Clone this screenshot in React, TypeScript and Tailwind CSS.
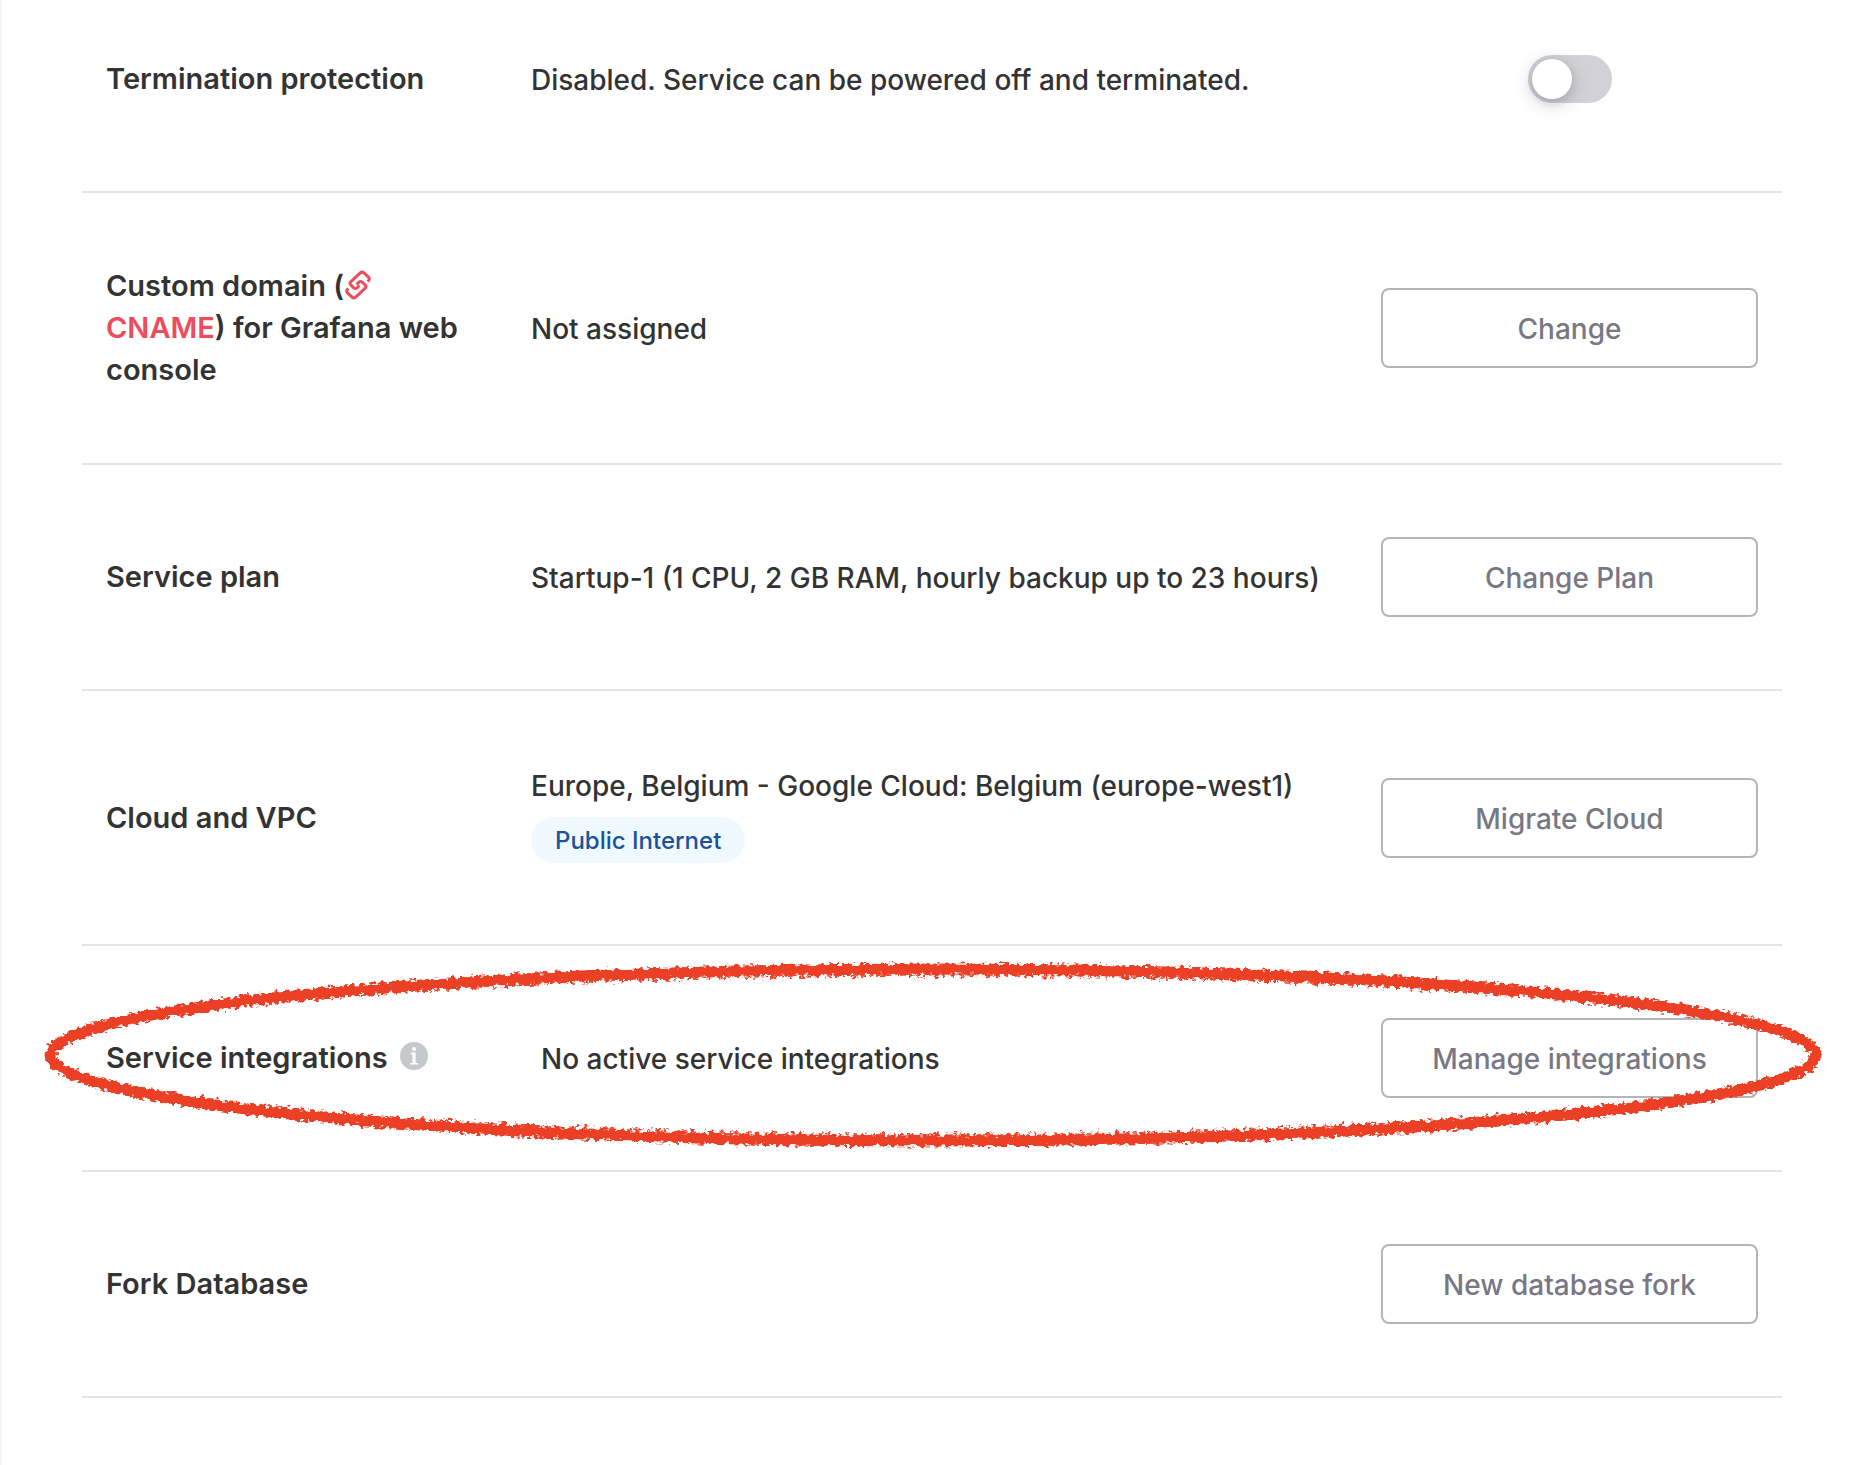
import type { ReactNode } from "react";

function Row({ label, children, action, first }: { label: ReactNode; children?: ReactNode; action: ReactNode; first?: boolean }) {
  return (
    <section
      className={
        "relative grid grid-cols-[1fr_2fr_1fr] items-center border-b-2 border-[#e4e4e5] pb-[72px] " +
        (first ? "pt-[39px]" : "pt-[72px]")
      }
    >
      <h2 className="px-6 text-[29px] leading-[42px] font-semibold">{label}</h2>
      <div className="px-6 pt-0.5 font-[450]">{children}</div>
      <div className="flex min-h-20 items-center justify-center px-6">{action}</div>
    </section>
  );
}

function ActionButton({ children }: { children: ReactNode }) {
  return (
    <button
      type="button"
      className="h-20 w-full rounded-lg border-2 border-[#b4b4bb] bg-white pt-0.5 font-medium text-[#787885]"
    >
      {children}
    </button>
  );
}

function LinkIcon() {
  return (
    <svg
      viewBox="-14 -15 28 30"
      className="inline-block h-[30px] w-[28px] align-[-4px]"
      fill="none"
      stroke="currentColor"
      strokeWidth="3"
      strokeLinejoin="round"
      aria-hidden="true"
    >
      <path d="M9.6 -3.4 L10.6 -4.5 Q12 -6.2 10.5 -7.8 L6 -12.1 Q4.1 -13.7 2.3 -12.1 L-7.3 -3.2 Q-8.6 -1.7 -7.3 -.2 L-4.2 2.8 Q-2.6 4.2 -1 2.8 L1.4 .5" />
      <path d="M-9.6 3.4 L-10.6 4.5 Q-12 6.2 -10.5 7.8 L-6 12.1 Q-4.1 13.7 -2.3 12.1 L7.3 3.2 Q8.6 1.7 7.3 .2 L4.2 -2.8 Q2.6 -4.2 1 -2.8 L-1.4 -.5" />
    </svg>
  );
}

function InfoIcon() {
  return (
    <svg viewBox="0 0 28 28" className="ml-3 inline-block size-7 align-[-2px]" role="img" aria-label="Information">
      <circle cx="14" cy="14" r="14" fill="#c5c8cc" />
      <circle cx="14" cy="7" r="2" fill="#fff" />
      <path d="M10.5 10.6H15.6V21H18v1.6H10V21h2.5V12.2h-2z" fill="#fff" />
    </svg>
  );
}

function HandDrawnEllipse() {
  return (
    <svg
      viewBox="0 0 1784 200"
      preserveAspectRatio="none"
      className="pointer-events-none absolute -right-[42px] -left-[42px] top-2 h-[200px] w-[calc(100%+84px)]"
      aria-hidden="true"
    >
      <defs>
        <filter id="crayon" x="-2%" y="-10%" width="104%" height="120%" colorInterpolationFilters="sRGB">
          <feTurbulence type="fractalNoise" baseFrequency="0.2 0.3" numOctaves="2" seed="7" result="noise" />
          <feDisplacementMap in="SourceGraphic" in2="noise" scale="9" xChannelSelector="R" yChannelSelector="G" />
        </filter>
      </defs>
      <g filter="url(#crayon)" fill="none" stroke="#eb4025">
        <ellipse cx="893" cy="101" rx="883" ry="86" strokeWidth="11" />
        <ellipse cx="893" cy="101" rx="876" ry="79" strokeWidth="2" strokeDasharray="3 5 2 8 5 4" />
      </g>
    </svg>
  );
}

export default function App() {
  return (
    <main className="min-h-screen border-l-2 border-[#f7f7f8] bg-white pr-[69px] pl-20 font-['Inter',sans-serif] text-[28px] leading-[42px] text-[#333]">
      <Row
        first
        label={<label htmlFor="termination">Termination protection</label>}
        action={
          <input
            id="termination"
            type="checkbox"
            role="switch"
            className="flex h-12 w-[84px] cursor-pointer appearance-none items-center rounded-full bg-[#d2d2d6] p-1 before:size-10 before:rounded-full before:bg-white before:shadow-[0_4px_16px_rgba(60,50,80,0.35)] before:content-[''] checked:justify-end checked:bg-[#3545be]"
          />
        }
      >
        Disabled. Service can be powered off and terminated.
      </Row>
      <Row
        label={
          <>
            Custom domain (
            <a href="#cname" className="text-[#ee4c5c]">
              <LinkIcon /> CNAME
            </a>
            ) for Grafana web console
          </>
        }
        action={<ActionButton>Change</ActionButton>}
      >
        Not assigned
      </Row>
      <Row label="Service plan" action={<ActionButton>Change Plan</ActionButton>}>
        Startup-1 (1 CPU, 2 GB RAM, hourly backup up to 23 hours)
      </Row>
      <Row label="Cloud and VPC" action={<ActionButton>Migrate Cloud</ActionButton>}>
        <p>Europe, Belgium - Google Cloud: Belgium (europe-west1)</p>
        <span className="mt-[10px] mb-[9px] flex h-[46px] w-fit items-center rounded-full bg-[#f0f9ff] px-6 pt-px text-2xl font-medium text-[#1b5299]">
          Public Internet
        </span>
      </Row>
      <div className="relative">
        <Row
          label={
            <>
              Service integrations
              <InfoIcon />
            </>
          }
          action={<ActionButton>Manage integrations</ActionButton>}
        >
          <p className="pl-[10px]">No active service integrations</p>
        </Row>
        <HandDrawnEllipse />
      </div>
      <Row label="Fork Database" action={<ActionButton>New database fork</ActionButton>} />
    </main>
  );
}
